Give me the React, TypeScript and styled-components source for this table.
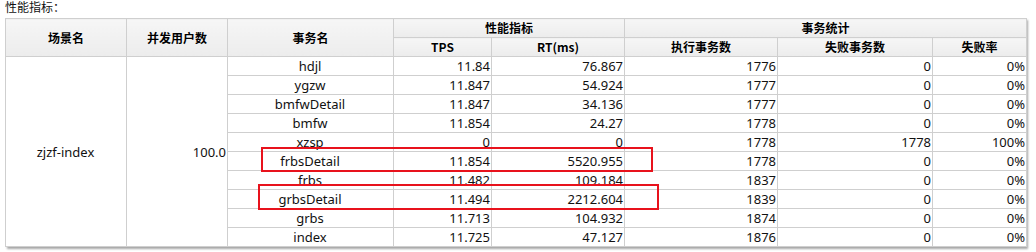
import React from "react";
import styled, { createGlobalStyle } from "styled-components";

const Global = createGlobalStyle`
  html, body { margin: 0; padding: 0; background: #fff; }
  body { font-family: "Noto Sans", "Noto Sans CJK SC", sans-serif; color: #000; }
`;

const Page = styled.div`
  padding: 0 0 0 5px;
  width: 1031px;
  overflow: hidden;
  height: 252px;
`;

const Title = styled.div`
  height: 18px;
  font-size: 12px;
  line-height: 14px;
  color: #111;
  font-family: "Noto Sans CJK SC", sans-serif;
`;

const Frame = styled.div`
  position: relative;
  width: 1021px;
  box-shadow: 2px 2px 2px rgba(0, 0, 0, 0.35);
`;

const Table = styled.table`
  border-collapse: collapse;
  table-layout: fixed;
  width: 1021px;
  font-size: 13px;
`;

const Th = styled.th`
  border: 1px solid #cfcfcf;
  background: linear-gradient(#f6f6f6, #ececec);
  font-family: "Noto Sans CJK SC", sans-serif;
  font-weight: bold;
  font-size: 12px;
  height: 18px;
  line-height: 18px;
  padding: 0;
  text-align: center;
  color: #000;
  text-shadow: 0 0 2px #fff;
`;

const Td = styled.td<{ $align?: "left" | "center" | "right" }>`
  border: 1px solid #cfcfcf;
  height: 18px;
  line-height: 18px;
  padding: 0 1px 0 0;
  text-align: ${(p) => p.$align ?? "right"};
  vertical-align: middle;
  color: #111;
  white-space: nowrap;
`;

const Highlight = styled.div<{ $l: number; $t: number; $w: number; $h: number }>`
  position: absolute;
  left: ${(p) => p.$l}px;
  top: ${(p) => p.$t}px;
  width: ${(p) => p.$w}px;
  height: ${(p) => p.$h}px;
  border: 2px solid #e8121c;
  box-sizing: border-box;
  pointer-events: none;
`;

const rows = [
  ["hdjl", "11.84", "76.867", "1776", "0", "0%"],
  ["ygzw", "11.847", "54.924", "1777", "0", "0%"],
  ["bmfwDetail", "11.847", "34.136", "1777", "0", "0%"],
  ["bmfw", "11.854", "24.27", "1778", "0", "0%"],
  ["xzsp", "0", "0", "1778", "1778", "100%"],
  ["frbsDetail", "11.854", "5520.955", "1778", "0", "0%"],
  ["frbs", "11.482", "109.184", "1837", "0", "0%"],
  ["grbsDetail", "11.494", "2212.604", "1839", "0", "0%"],
  ["grbs", "11.713", "104.932", "1874", "0", "0%"],
  ["index", "11.725", "47.127", "1876", "0", "0%"],
];

const widths = [121, 101, 166, 98, 133, 153, 155, 94];

export default function App() {
  return (
    <>
      <Global />
      <Page>
        <Title>性能指标：</Title>
        <Frame>
          <Table>
            <colgroup>
              {widths.map((w, i) => (
                <col key={i} style={{ width: w }} />
              ))}
            </colgroup>
            <thead>
              <tr>
                <Th rowSpan={2}>场景名</Th>
                <Th rowSpan={2}>并发用户数</Th>
                <Th rowSpan={2}>事务名</Th>
                <Th colSpan={2}>性能指标</Th>
                <Th colSpan={3}>事务统计</Th>
              </tr>
              <tr>
                <Th>TPS</Th>
                <Th>RT(ms)</Th>
                <Th>执行事务数</Th>
                <Th>失败事务数</Th>
                <Th>失败率</Th>
              </tr>
            </thead>
            <tbody>
              {rows.map((r, i) => (
                <tr key={r[0]}>
                  {i === 0 && (
                    <>
                      <Td rowSpan={rows.length} $align="center">
                        zjzf-index
                      </Td>
                      <Td rowSpan={rows.length}>100.0</Td>
                    </>
                  )}
                  <Td $align="center">{r[0]}</Td>
                  <Td>{r[1]}</Td>
                  <Td>{r[2]}</Td>
                  <Td>{r[3]}</Td>
                  <Td>{r[4]}</Td>
                  <Td>{r[5]}</Td>
                </tr>
              ))}
            </tbody>
          </Table>
          <Highlight $l={256} $t={129} $w={392} $h={25} />
          <Highlight $l={253} $t={166} $w={401} $h={26} />
        </Frame>
      </Page>
    </>
  );
}
